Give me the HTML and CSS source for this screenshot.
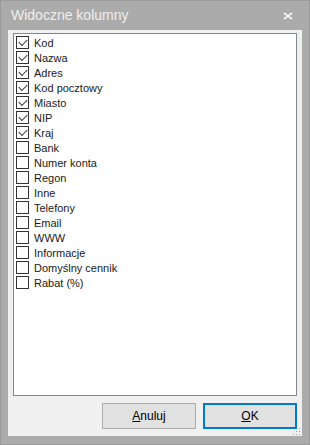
FILE: index.html
```html
<!DOCTYPE html>
<html>
<head>
  <title>Widoczne kolumny</title>
  <link rel="stylesheet" href="styles.css">
</head>
<body>
  <div class="window">
    <div class="titlebar">
      <span class="title">Widoczne kolumny</span>
      <svg class="close" width="10" height="8" viewBox="0 0 10 8">
        <path d="M1 1 L9 7 M9 1 L1 7" stroke="#f2f2f2" stroke-width="1.8"/>
      </svg>
    </div>
    <div class="content">
      <div class="list">
        <label class="item"><span class="box checked"></span>Kod</label>
        <label class="item"><span class="box checked"></span>Nazwa</label>
        <label class="item"><span class="box checked"></span>Adres</label>
        <label class="item"><span class="box checked"></span>Kod pocztowy</label>
        <label class="item"><span class="box checked"></span>Miasto</label>
        <label class="item"><span class="box checked"></span>NIP</label>
        <label class="item"><span class="box checked"></span>Kraj</label>
        <label class="item"><span class="box"></span>Bank</label>
        <label class="item"><span class="box"></span>Numer konta</label>
        <label class="item"><span class="box"></span>Regon</label>
        <label class="item"><span class="box"></span>Inne</label>
        <label class="item"><span class="box"></span>Telefony</label>
        <label class="item"><span class="box"></span>Email</label>
        <label class="item"><span class="box"></span>WWW</label>
        <label class="item"><span class="box"></span>Informacje</label>
        <label class="item"><span class="box"></span>Domyślny cennik</label>
        <label class="item"><span class="box"></span>Rabat (%)</label>
      </div>
      <div class="buttons">
        <button class="btn"><u>A</u>nuluj</button>
        <button class="btn default"><u>O</u>K</button>
      </div>
      <div class="grip"></div>
    </div>
  </div>
</body>
</html>
```

FILE: styles.css
```css
body {
  margin: 0;
  background: #ababab;
  font-family: "Liberation Sans", Arial, sans-serif;
}

.window {
  width: 310px;
  height: 445px;
  box-sizing: border-box;
  background: #ababab;
  border: 1px solid #9a9a9a;
  padding: 0 7px 8px 7px;
  display: flex;
  flex-direction: column;
}

.titlebar {
  height: 29px;
  display: flex;
  align-items: center;
  justify-content: space-between;
  padding: 0 9px 0 3px;
}

.title {
  color: #efefef;
  font-size: 14px;
  font-family: "Liberation Sans", Arial, sans-serif;
  margin-top: -2px;
}

.close {
  margin-top: 0;
}

.content {
  flex: 1;
  background: #f0f0f0;
  position: relative;
  padding: 3px 5px 0 5px;
  display: flex;
  flex-direction: column;
}

.list {
  height: 363px;
  box-sizing: border-box;
  background: #fff;
  border: 1px solid #828790;
  padding: 1px 2px;
}

.item {
  display: flex;
  align-items: center;
  height: 15px;
  font-size: 11px;
  color: #1a1a1a;
}

.box {
  width: 11px;
  height: 11px;
  border: 1px solid #333;
  background: #fff;
  margin-right: 5px;
  position: relative;
  flex: none;
}

.box.checked::after {
  content: "";
  position: absolute;
  left: 2px;
  top: 0px;
  width: 7px;
  height: 4px;
  border-left: 1px solid #333;
  border-bottom: 1px solid #333;
  transform: translate(0, 2px) rotate(-45deg);
  transform-origin: center;
}

.buttons {
  display: flex;
  justify-content: flex-end;
  gap: 7px;
  margin-top: 7px;
  padding-right: 0;
}

.btn {
  width: 94px;
  height: 26px;
  background: #e1e1e1;
  border: 1px solid #adadad;
  font-family: "Liberation Sans", Arial, sans-serif;
  font-size: 12px;
  color: #000;
  padding: 0;
}

.btn.default {
  border: 2px solid #0078d7;
}

.grip {
  position: absolute;
  right: 2px;
  bottom: 1px;
  width: 8px;
  height: 8px;
  background:
    radial-gradient(circle, #a0a0a0 0.8px, transparent 1px) 0 0 / 3px 3px;
  clip-path: polygon(100% 0, 100% 100%, 0 100%);
}
```
